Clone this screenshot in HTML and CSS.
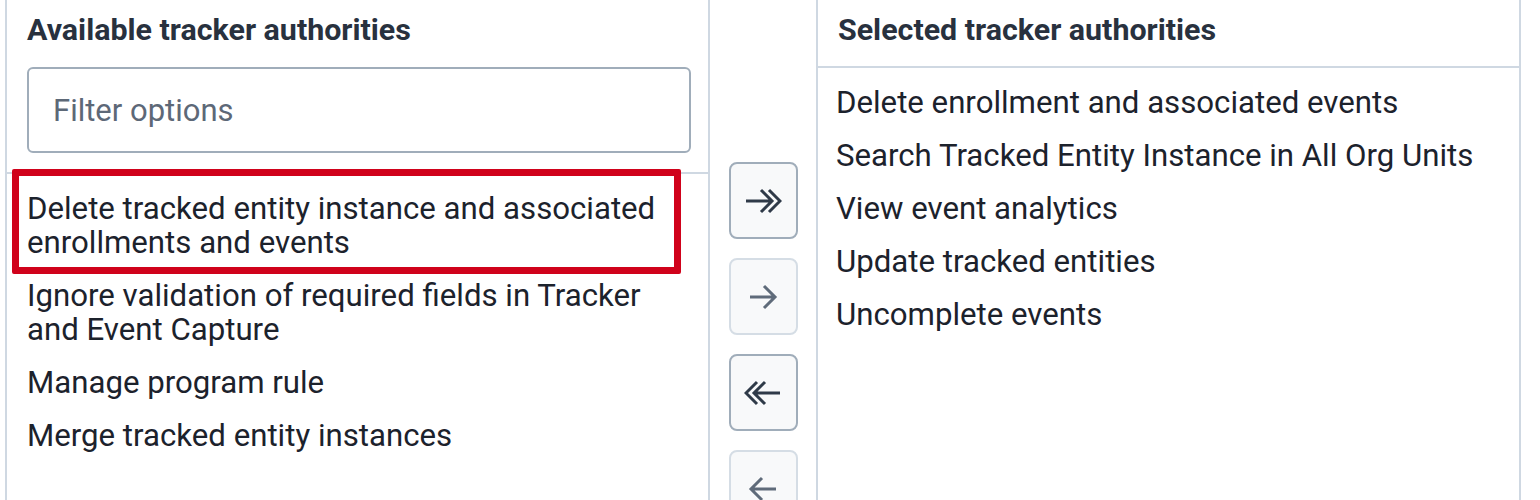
FILE: index.html
```html
<!DOCTYPE html>
<html lang="en">
<head>
<meta charset="utf-8">
<title>Tracker authorities</title>
<link rel="stylesheet" href="styles.css">
</head>
<body>
<div class="transfer">
  <section class="panel source">
    <div class="panel-head">
      <h2 class="title">Available tracker authorities</h2>
      <input class="filter" type="text" placeholder="Filter options">
    </div>
    <ul class="options">
      <li class="option highlighted">Delete tracked entity instance and associated enrollments and events</li>
      <li class="option">Ignore validation of required fields in Tracker and Event Capture</li>
      <li class="option">Manage program rule</li>
      <li class="option">Merge tracked entity instances</li>
    </ul>
  </section>

  <div class="actions">
    <button class="move" type="button" aria-label="Add all">
      <svg width="38" height="26" viewBox="0 0 38 26"><path d="M2 13H28M17 2L28 13L17 24M25 2L36 13L25 24"/></svg>
    </button>
    <button class="move disabled" type="button" aria-label="Add">
      <svg width="30" height="26" viewBox="0 0 30 26"><path d="M2 13H27M16 2L27 13L16 24"/></svg>
    </button>
    <button class="move" type="button" aria-label="Remove all">
      <svg width="38" height="26" viewBox="0 0 38 26"><path d="M36 13H10M21 2L10 13L21 24M13 2L2 13L13 24"/></svg>
    </button>
    <button class="move disabled" type="button" aria-label="Remove">
      <svg width="30" height="26" viewBox="0 0 30 26"><path d="M28 13H3M14 2L3 13L14 24"/></svg>
    </button>
  </div>

  <section class="panel picked">
    <div class="panel-head">
      <h2 class="title">Selected tracker authorities</h2>
    </div>
    <ul class="options">
      <li class="option">Delete enrollment and associated events</li>
      <li class="option">Search Tracked Entity Instance in All Org Units</li>
      <li class="option">View event analytics</li>
      <li class="option">Update tracked entities</li>
      <li class="option">Uncomplete events</li>
    </ul>
  </section>
</div>
</body>
</html>
```

FILE: styles.css
```css
* {
  box-sizing: border-box;
}

html, body {
  margin: 0;
  padding: 0;
  background: #ffffff;
  overflow: hidden;
}

body {
  font-family: Roboto, "Liberation Sans", sans-serif;
  color: #212934;
}

.transfer {
  display: flex;
  align-items: stretch;
  margin-left: 5px;
  height: 560px;
}

.panel {
  width: 705px;
  flex: 0 0 705px;
  border-left: 2px solid #cfd8e2;
  border-right: 2px solid #cfd8e2;
  display: flex;
  flex-direction: column;
}

.panel-head {
  padding: 12px 17px 19px 20px;
  border-bottom: 2px solid #cfd8e2;
}

.picked .panel-head {
  padding-bottom: 18px;
}

.title {
  margin: 0;
  font-size: 30.4px;
  line-height: 36px;
  font-weight: 700;
  color: #28313e;
}

.filter {
  display: block;
  width: 100%;
  height: 86px;
  margin-top: 19px;
  padding: 0 24px;
  border: 2px solid #a0adba;
  border-radius: 6px;
  background: #ffffff;
  font-family: Roboto, "Liberation Sans", sans-serif;
  font-size: 31px;
  color: #212934;
  outline: none;
}

.filter::placeholder {
  color: #5d6877;
  opacity: 1;
}

.options {
  list-style: none;
  margin: 0;
  padding: 8px 0 0;
}

.option {
  position: relative;
  padding: 9.5px 20px 9.5px 20px;
  font-size: 31.2px;
  line-height: 34px;
  color: #1c222c;
}

.picked .option {
  padding-left: 18px;
}

.highlighted::after {
  content: "";
  position: absolute;
  left: 5px;
  right: 27px;
  top: -13px;
  bottom: -5px;
  border: 7px solid #d0021b;
  border-radius: 2px;
  pointer-events: none;
}

.actions {
  flex: 0 0 106px;
  display: flex;
  flex-direction: column;
  align-items: center;
  gap: 19px;
  padding-top: 162px;
}

.move {
  width: 69px;
  height: 77px;
  flex: 0 0 77px;
  padding: 0;
  display: flex;
  align-items: center;
  justify-content: center;
  border: 2px solid #a0adba;
  border-radius: 8px;
  background: #f8f9fa;
  cursor: pointer;
}

.move svg {
  display: block;
  fill: none;
  stroke: #2f3a48;
  stroke-width: 3;
  stroke-linecap: butt;
  stroke-linejoin: miter;
}

.move.disabled {
  border-color: #d5dde5;
  background: #f8f9fa;
  cursor: not-allowed;
}

.move.disabled svg {
  stroke: #5f6b7a;
}
```
